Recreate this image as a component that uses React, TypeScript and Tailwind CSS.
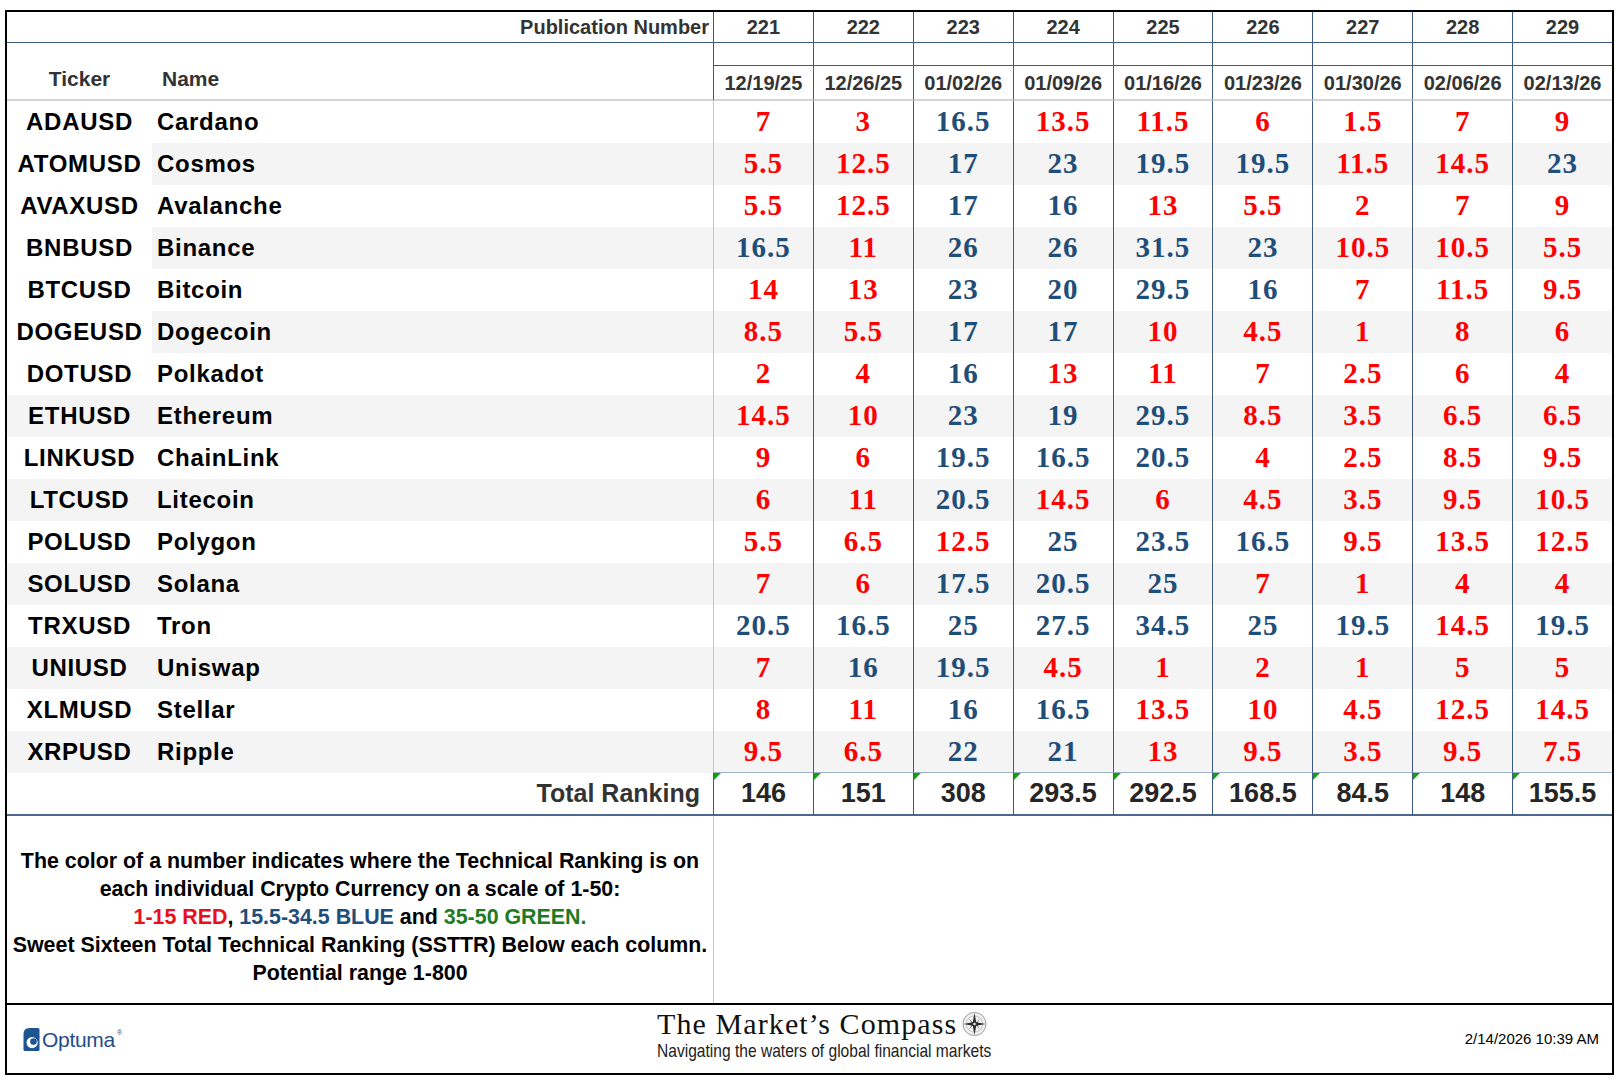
import React from 'react'

const pubs = [
  { n: '221', d: '12/19/25', t: '146' },
  { n: '222', d: '12/26/25', t: '151' },
  { n: '223', d: '01/02/26', t: '308' },
  { n: '224', d: '01/09/26', t: '293.5' },
  { n: '225', d: '01/16/26', t: '292.5' },
  { n: '226', d: '01/23/26', t: '168.5' },
  { n: '227', d: '01/30/26', t: '84.5' },
  { n: '228', d: '02/06/26', t: '148' },
  { n: '229', d: '02/13/26', t: '155.5' },
]

const rows: [string, string, number[]][] = [
  ['ADAUSD', 'Cardano', [7, 3, 16.5, 13.5, 11.5, 6, 1.5, 7, 9]],
  ['ATOMUSD', 'Cosmos', [5.5, 12.5, 17, 23, 19.5, 19.5, 11.5, 14.5, 23]],
  ['AVAXUSD', 'Avalanche', [5.5, 12.5, 17, 16, 13, 5.5, 2, 7, 9]],
  ['BNBUSD', 'Binance', [16.5, 11, 26, 26, 31.5, 23, 10.5, 10.5, 5.5]],
  ['BTCUSD', 'Bitcoin', [14, 13, 23, 20, 29.5, 16, 7, 11.5, 9.5]],
  ['DOGEUSD', 'Dogecoin', [8.5, 5.5, 17, 17, 10, 4.5, 1, 8, 6]],
  ['DOTUSD', 'Polkadot', [2, 4, 16, 13, 11, 7, 2.5, 6, 4]],
  ['ETHUSD', 'Ethereum', [14.5, 10, 23, 19, 29.5, 8.5, 3.5, 6.5, 6.5]],
  ['LINKUSD', 'ChainLink', [9, 6, 19.5, 16.5, 20.5, 4, 2.5, 8.5, 9.5]],
  ['LTCUSD', 'Litecoin', [6, 11, 20.5, 14.5, 6, 4.5, 3.5, 9.5, 10.5]],
  ['POLUSD', 'Polygon', [5.5, 6.5, 12.5, 25, 23.5, 16.5, 9.5, 13.5, 12.5]],
  ['SOLUSD', 'Solana', [7, 6, 17.5, 20.5, 25, 7, 1, 4, 4]],
  ['TRXUSD', 'Tron', [20.5, 16.5, 25, 27.5, 34.5, 25, 19.5, 14.5, 19.5]],
  ['UNIUSD', 'Uniswap', [7, 16, 19.5, 4.5, 1, 2, 1, 5, 5]],
  ['XLMUSD', 'Stellar', [8, 11, 16, 16.5, 13.5, 10, 4.5, 12.5, 14.5]],
  ['XRPUSD', 'Ripple', [9.5, 6.5, 22, 21, 13, 9.5, 3.5, 9.5, 7.5]],
]

const numColor = (v: number) =>
  v <= 15 ? 'text-[#ff0000]' : v < 35 ? 'text-[#1f4e79]' : 'text-[#1e7b22]'

const OptumaLogo = () => (
  <div className="flex items-center gap-[2px]">
    <svg width="17" height="23" viewBox="0 0 16 23">
      <path d="M6 0 H14.5 Q16 0 16 1.5 V21.5 Q16 23 14.5 23 H1.5 Q0 23 0 21.5 V6 Q0 0 6 0 Z" fill="#1d5592" />
      <circle cx="8.6" cy="14.6" r="5.6" fill="#fff" />
      <circle cx="10" cy="13.6" r="3.3" fill="#1d5592" />
      <path d="M8.5 9 Q13.5 7.5 15 12 L16 9 Q12 5 7 8 Z" fill="#1d5592" />
    </svg>
    <span className="text-[21px] leading-none tracking-[-0.3px] text-[#1f4e8a]">Optuma</span>
    <span className="mt-[1px] self-start text-[7px] leading-none text-[#1f4e8a]">®</span>
  </div>
)

const CompassRose = () => (
  <svg width="25" height="26" viewBox="0 0 26 26">
    <circle cx="13" cy="13" r="12" fill="#f1f1f1" stroke="#9a9a9a" strokeWidth="1" />
    <circle cx="13" cy="13" r="8.5" fill="none" stroke="#b8b8b8" strokeWidth="0.8" />
    <polygon points="13,13 7,7 10.5,13 7,19 13,13 19,19 15.5,13 19,7" fill="#8a8a8a" />
    <polygon points="13,1.5 14.8,11.2 24.5,13 14.8,14.8 13,24.5 11.2,14.8 1.5,13 11.2,11.2" fill="#2b2b2b" />
    <circle cx="13" cy="13" r="1.4" fill="#e8e8e8" />
  </svg>
)

const App = () => {
  return (
    <div className="min-h-[1081px] bg-white pt-[10px] font-['Liberation_Sans',Arial,sans-serif]">
      <div className="ml-[5px] w-[1609px] border-2 border-black">
        <div className="grid grid-cols-[145px_561px_repeat(9,minmax(0,1fr))]">
          {/* publication number row */}
          <div className="col-span-2 flex h-[31px] items-center justify-end border-b border-[#3b5a84] pr-[4px] text-[20px] font-bold text-[#333]">
            Publication Number
          </div>
          {pubs.map((p) => (
            <div key={p.n} className="flex h-[31px] items-center justify-center border-b border-l border-[#3b5a84] text-[20px] font-bold text-[#333]">
              {p.n}
            </div>
          ))}

          {/* empty sub row */}
          <div className="col-span-2 h-[23px]" />
          {pubs.map((p) => (
            <div key={p.n} className="h-[23px] border-b border-l border-[#3b5a84]" />
          ))}

          {/* dates row */}
          <div className="flex h-[35px] items-center justify-center border-b-2 border-[#d4d4d4] pb-[7px] text-[21px] font-bold text-[#333]">
            Ticker
          </div>
          <div className="flex h-[35px] items-center border-b-2 border-[#d4d4d4] pb-[7px] pl-[10px] text-[21px] font-bold text-[#333]">
            Name
          </div>
          {pubs.map((p) => (
            <div key={p.n} className="flex h-[35px] items-center justify-center border-b-2 border-l border-b-[#d4d4d4] border-l-[#3b5a84] text-[20px] font-bold text-[#333]">
              {p.d}
            </div>
          ))}

          {/* data rows */}
          {rows.map(([tk, name, vals], i) => {
            const shade = i % 2 === 1
            const tickShade = shade && i >= 7
            return (
              <React.Fragment key={tk}>
                <div className={`flex h-[42px] items-center justify-center text-[24px] font-bold tracking-[0.7px] text-black ${tickShade ? 'bg-[#f4f4f4]' : 'bg-white'}`}>
                  {tk}
                </div>
                <div className={`flex h-[42px] items-center pl-[5px] text-[24px] font-bold tracking-[0.7px] text-black ${shade ? 'bg-[#f4f4f4]' : 'bg-white'}`}>
                  {name}
                </div>
                {vals.map((v, j) => (
                  <div
                    key={j}
                    className={`flex h-[42px] items-center justify-center border-l font-['Liberation_Serif','Times_New_Roman',serif] text-[29px] font-bold tracking-[1px] ${j === 0 ? 'border-[#c4c4c4]' : 'border-[#3b5a84]'} ${shade ? 'bg-[#f4f4f4]' : 'bg-white'} ${numColor(v)} ${i === rows.length - 1 ? 'border-b border-b-[#9fb1c9]' : ''}`}
                  >
                    {v}
                  </div>
                ))}
              </React.Fragment>
            )
          })}

          {/* totals */}
          <div className="col-span-2 flex h-[43px] items-center justify-end border-b-2 border-[#4a6890] pr-[13px] text-[25px] font-bold text-[#333]">
            Total Ranking
          </div>
          {pubs.map((p) => (
            <div key={p.n} className="relative flex h-[43px] items-center justify-center border-b-2 border-l border-b-[#4a6890] border-l-[#3b5a84] text-[27px] font-bold text-[#262626]">
              <span className="absolute left-0 top-0 h-0 w-0 border-r-[7px] border-t-[7px] border-r-transparent border-t-[#12a012]" />
              {p.t}
            </div>
          ))}

          {/* legend */}
          <div className="col-span-2 flex h-[187px] flex-col items-center pt-[31px] text-center text-[21.4px] font-bold leading-[28px] text-black">
            <div>The color of a number indicates where the Technical Ranking is on</div>
            <div>each individual Crypto Currency on a scale of 1-50:</div>
            <div>
              <span className="text-[#e8111b]">1-15 RED</span>, <span className="text-[#1f4e79]">15.5-34.5 BLUE</span> and{' '}
              <span className="text-[#1e7b22]">35-50 GREEN.</span>
            </div>
            <div>Sweet Sixteen Total Technical Ranking (SSTTR) Below each column.</div>
            <div>Potential range 1-800</div>
          </div>
          <div className="col-span-9 h-[187px] border-l border-[#c4c4c4]" />
        </div>

        {/* footer */}
        <div className="flex h-[70px] items-center border-t-2 border-black pl-[16px] pr-[13px]">
          <div className="w-[110px]">
            <OptumaLogo />
          </div>
          <div className="-mt-[9px] ml-[524px] flex flex-col">
            <div className="flex items-center gap-[5px]">
              <span className="font-['Liberation_Serif','Times_New_Roman',serif] text-[30px] leading-[32px] tracking-[1.1px] text-[#111]">
                The Market’s Compass
              </span>
              <CompassRose />
            </div>
            <span className="inline-block origin-left scale-x-[0.82] whitespace-nowrap text-[19px] leading-[21px] text-[#222]">
              Navigating the waters of global financial markets
            </span>
          </div>
          <div className="ml-auto text-[15px] text-black">2/14/2026 10:39 AM</div>
        </div>
      </div>
    </div>
  )
}

export default App
